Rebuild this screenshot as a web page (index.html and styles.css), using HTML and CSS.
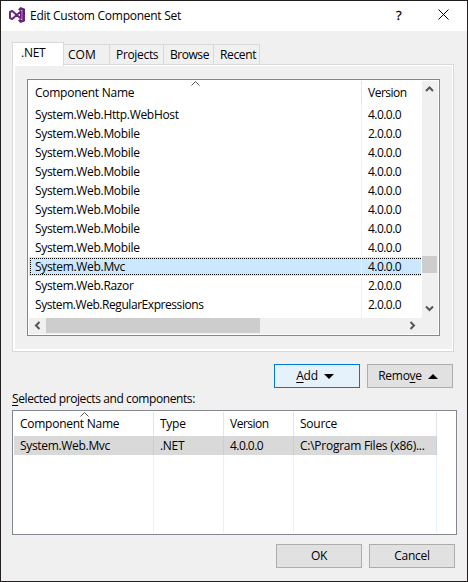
FILE: index.html
```html
<!DOCTYPE html>
<html lang="en">
<head>
<meta charset="utf-8">
<title>Edit Custom Component Set</title>
<link rel="stylesheet" href="styles.css">
</head>
<body>
<div class="dialog">
  <header class="titlebar">
    <svg class="logo" width="16" height="16" viewBox="0 0 16 16"><path d="M1 4.800V11.200L3.200 12 11.800 4.400V11.600L3.200 4Z" fill="none" stroke="#68217a" stroke-width="1.900" stroke-linejoin="round"/><path d="M11.500 0L16 1.700V14.300L11.500 16 9 13.500 11 12 13.200 13.200V2.800L11 4 9 2.500Z" fill="#68217a"/></svg>
    <h1>Edit Custom Component Set</h1>
    <span class="help">?</span>
    <svg class="close" width="11" height="11" viewBox="0 0 11 11"><path d="M.5.5l10 10M10.5.5l-10 10" stroke="#000" fill="none"/></svg>
  </header>
  <nav class="tabs">
    <div class="tab active">.NET</div>
    <div class="tab com">COM</div>
    <div class="tab projects">Projects</div>
    <div class="tab browse">Browse</div>
    <div class="tab recent">Recent</div>
  </nav>
  <section class="panel">
    <div class="list available">
      <div class="table">
        <div class="row head"><span>Component Name</span><span class="vhead">Version</span>
          <svg class="sort" width="9" height="5" viewBox="0 0 9 5"><path d="M.5 4.5l4-4 4 4" fill="none" stroke="#555"/></svg>
        </div>
        <div class="row"><span>System.Web.Http.WebHost</span><span class="ver">4.0.0.0</span></div>
        <div class="row"><span>System.Web.Mobile</span><span class="ver">2.0.0.0</span></div>
        <div class="row"><span>System.Web.Mobile</span><span class="ver">4.0.0.0</span></div>
        <div class="row"><span>System.Web.Mobile</span><span class="ver">4.0.0.0</span></div>
        <div class="row"><span>System.Web.Mobile</span><span class="ver">4.0.0.0</span></div>
        <div class="row"><span>System.Web.Mobile</span><span class="ver">4.0.0.0</span></div>
        <div class="row"><span>System.Web.Mobile</span><span class="ver">4.0.0.0</span></div>
        <div class="row"><span>System.Web.Mobile</span><span class="ver">4.0.0.0</span></div>
        <div class="row selected"><span>System.Web.Mvc</span><span class="ver">4.0.0.0</span></div>
        <div class="row"><span>System.Web.Razor</span><span class="ver">2.0.0.0</span></div>
        <div class="row"><span class="tight">System.Web.RegularExpressions</span><span class="ver">2.0.0.0</span></div>
        <div class="row rest"><span></span><span></span></div>
      </div>
      <div class="vscroll">
        <svg width="9" height="7" viewBox="0 0 9 7"><path d="M1 5l3.5-3.5L8 5" fill="none" stroke="#555" stroke-width="2"/></svg>
        <div class="vthumb"></div>
        <svg width="9" height="7" viewBox="0 0 9 7"><path d="M1 1.5L4.500 5 8 1.500" fill="none" stroke="#555" stroke-width="2"/></svg>
      </div>
      <div class="hscroll">
        <svg width="7" height="9" viewBox="0 0 7 9"><path d="M5.500 1L2 4.500 5.500 8" fill="none" stroke="#555" stroke-width="2"/></svg>
        <div class="hthumb"></div>
        <svg width="7" height="9" viewBox="0 0 7 9"><path d="M1.500 1L5 4.500 1.500 8" fill="none" stroke="#555" stroke-width="2"/></svg>
      </div>
    </div>
  </section>
  <div class="actions">
    <button class="btn primary"><span><u>A</u>dd</span><svg width="10" height="5" viewBox="0 0 10 5"><path d="M0 0h10L5 5z"/></svg></button>
    <button class="btn"><span>Remo<u>v</u>e</span><svg width="10" height="5" viewBox="0 0 10 5"><path d="M0 5h10L5 0z"/></svg></button>
  </div>
  <div class="label"><u>S</u>elected projects and components:</div>
  <div class="list chosen">
    <div class="row head"><span>Component Name</span><span>Type</span><span class="vhead">Version</span><span>Source</span>
      <svg class="sort" width="9" height="5" viewBox="0 0 9 5"><path d="M.5 4.5l4-4 4 4" fill="none" stroke="#555"/></svg>
    </div>
    <div class="row picked"><span>System.Web.Mvc</span><span>.NET</span><span class="ver">4.0.0.0</span><span class="path">C:\Program Files (x86)...</span></div>
    <div class="row rest"><span></span><span></span><span></span><span></span></div>
  </div>
  <footer class="footer">
    <button class="btn">OK</button>
    <button class="btn cancel">Cancel</button>
  </footer>
</div>
</body>
</html>
```
FILE: styles.css
```css
* { box-sizing: border-box; }
body { margin: 0; }
svg { display: block; flex: none; }
.dialog {
  width: 468px; height: 582px;
  display: flex; flex-direction: column;
  border: 1px solid #231f20;
  background: #f0f0f0; color: #000;
  font: 12px/16px "Open Sans", "Noto Sans", sans-serif;
  letter-spacing: -0.25px;
  white-space: nowrap;
}
.titlebar { display: flex; flex: none; height: 30px; background: #fff; padding-left: 8px; }
.logo { margin-top: 6px; }
h1 { margin: 7px 0 0 5px; width: 366px; font: inherit; letter-spacing: -0.27px; }
.help { flex: none; margin-top: 6px; width: 42px; font-size: 13px; -webkit-text-stroke: 0.3px #000; }
.close { margin-top: 8px; }
.tabs { display: flex; align-items: flex-end; flex: none; height: 33px; padding-left: 11px; }
.tab { height: 20px; border: 1px solid #d9d9d9; border-width: 1px 1px 0 0; padding-top: 2px; }
.tab.active { width: 52px; height: 24px; margin-bottom: -2px; padding: 2px 0 0 8px; border-width: 1px 1px 0 1px; background: #fff; z-index: 1; }
.com { width: 46px; padding-left: 4px; letter-spacing: 0; }
.projects { width: 54px; padding-left: 6px; letter-spacing: -0.33px; }
.browse { width: 50px; padding-left: 6px; letter-spacing: -0.45px; }
.recent { width: 46px; padding-left: 6px; letter-spacing: -0.35px; }
.panel {
  flex: none; width: 442px; height: 288px; margin-left: 11px;
  padding: 14px 0 0 14px;
  border: 1px solid #d9d9d9;
  box-shadow: inset 0 0 0 1px #fff, inset 2px -2px #fff;
}
.list { border: 1px solid #828790; background: #fff; padding: 1px; }
.available {
  width: 413px; height: 257px;
  display: grid; grid-template: 237px 16px / 393px 16px;
}
.table { display: flex; flex-direction: column; }
.row { position: relative; display: flex; flex: none; height: 19px; line-height: 19px; letter-spacing: -0.32px; }
.row > span { flex: none; border-right: 1px solid #e5f3ff; padding-left: 6px; overflow: hidden; }
.row.head { height: 24px; line-height: 24px; letter-spacing: -0.26px; }
.row.head > span { border-color: #e5e5e5; }
.row.rest { flex: 1; height: auto; }
.available .row > span:first-child { width: 333px; }
.available .row > span:nth-child(2) { width: 59px; border: 0; }
.row > .ver { letter-spacing: -0.55px; }
.row > .vhead { letter-spacing: -0.5px; }
.row > .tight { letter-spacing: -0.44px; }
.row > .path { letter-spacing: -0.26px; }
.selected { background: #cce8ff; width: 392px; }
.selected::after { content: ""; position: absolute; inset: 1px 0 1px 1px; border: 1px dotted #000; border-right: 0; }
.sort { position: absolute; top: 0; left: 162px; }
.vscroll { background: #f0f0f0; display: flex; flex-direction: column; padding-top: 5px; }
.vscroll svg { margin-left: 3px; }
.vthumb { width: 15px; height: 17px; margin: 163px 0 32px; background: #cdcdcd; }
.hscroll { grid-column: 1 / 3; background: #f0f0f0; display: flex; padding-left: 5px; }
.hscroll svg { margin-top: 3px; }
.hthumb { width: 214px; height: 15px; margin: 0 149px 0 5px; background: #cdcdcd; }
.actions { display: flex; gap: 7px; margin: 12px 0 0 273px; flex: none; }
.btn {
  width: 86px; height: 24px; padding: 0 2px 0 0;
  display: flex; align-items: center; justify-content: center; gap: 6px;
  border: 1px solid #adadad; background: #e1e1e1; color: #000;
  font: inherit; letter-spacing: inherit;
}
.actions .btn { padding-right: 4px; }
.footer .btn { padding-right: 0; }
.primary { border-color: #0078d7; background: #e5f1fb; }
u { text-underline-offset: 2px; }
.label { margin: 3px 0 0 11px; height: 19px; letter-spacing: -0.4px; }
.chosen { width: 445px; height: 125px; margin-left: 11px; display: flex; flex-direction: column; flex: none; }
.chosen .row { width: 423px; }
.chosen .row > span:nth-child(1) { width: 140px; }
.chosen .row > span:nth-child(2), .chosen .row > span:nth-child(3) { width: 70px; }
.chosen .row > span:nth-child(4) { width: 143px; }
.chosen .sort { left: 66px; }
.picked { background: #d9d9d9; }
.picked > span { border-color: #c4d0da; }
.footer { display: flex; gap: 7px; margin: 9px 0 0 275px; }
```
